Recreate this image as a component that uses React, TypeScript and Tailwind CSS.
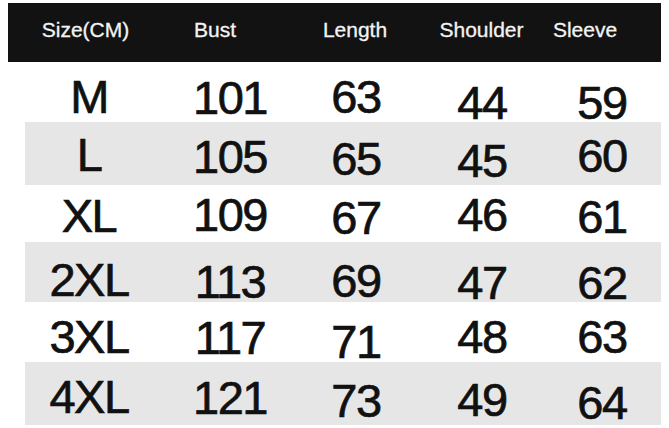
import clsx from "clsx";

type Cell = { text: string; dy: string };

type Row = {
  h: string;
  shaded: boolean;
  cells: Cell[];
};

// header columns are centred on the printed labels, not on the body columns
const HEADERS = [
  { label: "Size(CM)", w: "w-[155px]" },
  { label: "Bust", w: "w-[104px]" },
  { label: "Length", w: "w-[176px]" },
  { label: "Shoulder", w: "w-[77px]" },
  { label: "Sleeve", w: "w-[130px]" },
];

const COLS = ["w-[128px]", "w-[154px]", "w-[98px]", "w-[154px]", "w-[86px]"];

const ROWS: Row[] = [
  {
    h: "h-[60px]",
    shaded: false,
    cells: [
      { text: "M", dy: "translate-y-[4px]" },
      { text: "101", dy: "translate-y-[5px]" },
      { text: "63", dy: "translate-y-[4px]" },
      { text: "44", dy: "translate-y-[10px]" },
      { text: "59", dy: "translate-y-[10px]" },
    ],
  },
  {
    h: "h-[63px]",
    shaded: true,
    cells: [
      { text: "L", dy: "translate-y-[1px]" },
      { text: "105", dy: "translate-y-[3px]" },
      { text: "65", dy: "translate-y-[5px]" },
      { text: "45", dy: "translate-y-[7px]" },
      { text: "60", dy: "translate-y-[2px]" },
    ],
  },
  {
    h: "h-[57px]",
    shaded: false,
    cells: [
      { text: "XL", dy: "translate-y-[2px]" },
      { text: "109", dy: "translate-y-[1px]" },
      { text: "67", dy: "translate-y-[4px]" },
      { text: "46", dy: "translate-y-[1px]" },
      { text: "61", dy: "translate-y-[3px]" },
    ],
  },
  {
    h: "h-[60px]",
    shaded: true,
    cells: [
      { text: "2XL", dy: "translate-y-[7px]" },
      { text: "113", dy: "translate-y-[9px]" },
      { text: "69", dy: "translate-y-[8px]" },
      { text: "47", dy: "translate-y-[10px]" },
      { text: "62", dy: "translate-y-[10px]" },
    ],
  },
  {
    h: "h-[60px]",
    shaded: false,
    cells: [
      { text: "3XL", dy: "translate-y-[4px]" },
      { text: "117", dy: "translate-y-[5px]" },
      { text: "71", dy: "translate-y-[9px]" },
      { text: "48", dy: "translate-y-[4px]" },
      { text: "63", dy: "translate-y-[4px]" },
    ],
  },
  {
    h: "h-[63px]",
    shaded: true,
    cells: [
      { text: "4XL", dy: "translate-y-[3px]" },
      { text: "121", dy: "translate-y-[4px]" },
      { text: "73", dy: "translate-y-[7px]" },
      { text: "49", dy: "translate-y-[6px]" },
      { text: "64", dy: "translate-y-[9px]" },
    ],
  },
];

export default function App() {
  return (
    <div className="h-[428px] w-[669px] overflow-hidden bg-white font-['Liberation_Sans',Arial,sans-serif]">
      <div className="ml-[8px] mt-[3px] flex h-[59px] w-[653px] items-center bg-[#121212] text-[21px] leading-none text-[#f4f4f4] [-webkit-text-stroke:0.3px_#f4f4f4]">
        {HEADERS.map((col) => (
          <div key={col.label} className={clsx("flex justify-center", col.w)}>
            <span className="-translate-y-[3px] whitespace-nowrap">
              {col.label}
            </span>
          </div>
        ))}
      </div>

      <div className="ml-[25px] w-[636px] text-[47px] leading-none tracking-[-1.5px] text-[#111] [-webkit-text-stroke:0.7px_#111]">
        {ROWS.map((row) => (
          <div
            key={row.cells[0].text}
            className={clsx(
              "flex items-center",
              row.h,
              row.shaded && "bg-[#e6e6e6]",
            )}
          >
            {row.cells.map((cell, i) => (
              <div key={i} className={clsx("flex justify-center", COLS[i])}>
                <span className={clsx("whitespace-nowrap", cell.dy)}>
                  {cell.text}
                </span>
              </div>
            ))}
          </div>
        ))}
      </div>
    </div>
  );
}
